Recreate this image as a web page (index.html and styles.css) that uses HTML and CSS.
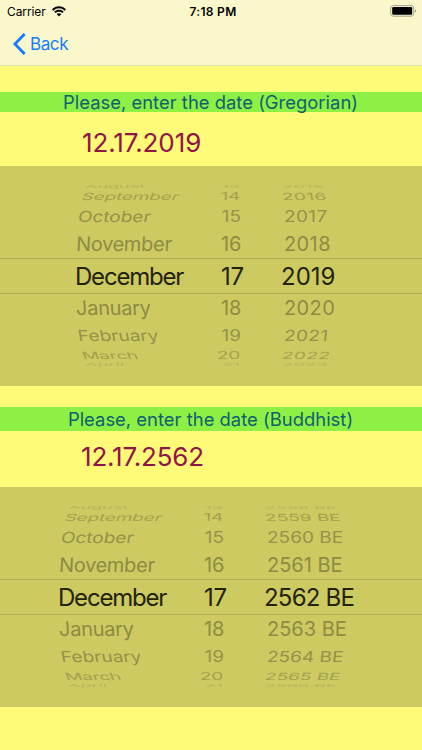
FILE: index.html
```html
<!DOCTYPE html>
<html lang="en">
<head>
    <meta charset="UTF-8">
    <meta name="viewport" content="width=device-width, initial-scale=1.0">
    <title>Calendar converter</title>
    <link rel="stylesheet" href="styles.css">
</head>
<body>
    <header>
        <div class="status">
            <div class="carrier">
                <span>Carrier</span>
                <svg width="14" height="11" viewBox="0 0 14 11">
                    <path d="M0 3.4C3.9-.7 10.1-.7 14 3.4L12.7 4.8C9.5 1.5 4.5 1.5 1.3 4.8ZM2.3 5.8C4.9 3.2 9.1 3.2 11.7 5.8L10.4 7.1C8.5 5.2 5.5 5.2 3.6 7.1ZM4.6 8.1C5.9 6.8 8.1 6.8 9.4 8.1L7 10.6Z"/>
                </svg>
            </div>
            <div class="clock">7:18 PM</div>
            <svg class="battery" width="27" height="12" viewBox="0 0 27 12">
                <rect x="0.7" y="0.6" width="23" height="10.6" rx="2.6" fill="none" stroke="#a3a187"/>
                <rect x="2.2" y="2.1" width="20" height="7.6" rx="1.2"/>
                <path d="M25 4.2C26.5 4.7 26.5 7.1 25 7.6Z" fill="#a3a187"/>
            </svg>
        </div>
        <div class="nav">
            <svg width="13" height="22" viewBox="0 0 13 22">
                <path d="M11.6 1L1.9 11L11.6 21" fill="none" stroke="#147efb" stroke-width="2.9"/>
            </svg>
            <span>Back</span>
        </div>
    </header>

    <div class="title">Please, enter the date (Gregorian)</div>
    <div class="date">12.17.2019</div>
    <div class="picker">
        <div class="row up far4"><span>August</span><span>13</span><span>2015</span></div>
        <div class="row up far3"><span>September</span><span>14</span><span>2016</span></div>
        <div class="row up far2"><span>October</span><span>15</span><span>2017</span></div>
        <div class="row up far1"><span>November</span><span>16</span><span>2018</span></div>
        <div class="row selected"><span>December</span><span>17</span><span>2019</span></div>
        <div class="row down far1"><span>January</span><span>18</span><span>2020</span></div>
        <div class="row down far2"><span>February</span><span>19</span><span>2021</span></div>
        <div class="row down far3"><span>March</span><span>20</span><span>2022</span></div>
        <div class="row down far4"><span>April</span><span>21</span><span>2023</span></div>
    </div>

    <div class="title tall">Please, enter the date (Buddhist)</div>
    <div class="date second">12.17.2562</div>
    <div class="picker buddhist">
        <div class="row up far4"><span>August</span><span>13</span><span>2558 BE</span></div>
        <div class="row up far3"><span>September</span><span>14</span><span>2559 BE</span></div>
        <div class="row up far2"><span>October</span><span>15</span><span>2560 BE</span></div>
        <div class="row up far1"><span>November</span><span>16</span><span>2561 BE</span></div>
        <div class="row selected"><span>December</span><span>17</span><span>2562 BE</span></div>
        <div class="row down far1"><span>January</span><span>18</span><span>2563 BE</span></div>
        <div class="row down far2"><span>February</span><span>19</span><span>2564 BE</span></div>
        <div class="row down far3"><span>March</span><span>20</span><span>2565 BE</span></div>
        <div class="row down far4"><span>April</span><span>21</span><span>2566 BE</span></div>
    </div>
</body>
</html>
```
FILE: styles.css
```css
body {
    margin: 0;
    height: 750px;
    overflow: hidden;
    background-color: #fffb79;
    font-family: Inter, "Liberation Sans", sans-serif;
}
header {
    box-sizing: border-box;
    height: 66px;
    background-color: #faf7cd;
    border-bottom: 1px solid #e0ddb0;
}
.status {
    display: grid;
    grid-template-columns: 1fr auto 1fr;
    align-items: center;
    height: 22px;
    padding: 0 5px 0 7px;
    font-size: 12px;
}
.carrier {
    display: flex;
    align-items: center;
    gap: 6px;
    letter-spacing: -0.1px;
}
.clock {
    padding-left: 2px;
    font-weight: 600;
    letter-spacing: 0.3px;
}
.battery {
    justify-self: end;
}
.nav {
    display: flex;
    align-items: center;
    gap: 4px;
    height: 43px;
    padding-left: 13px;
    color: #147efb;
    font-size: 17px;
    letter-spacing: -0.4px;
}
.title {
    height: 20px;
    margin-top: 26px;
    background-color: #8ef044;
    color: #0f6170;
    font-size: 18.4px;
    line-height: 21px;
    letter-spacing: 0.02px;
    text-align: center;
    text-indent: -1px;
    white-space: nowrap;
}
.title.tall {
    height: 24px;
    margin-top: 21px;
    line-height: 25px;
}
.date {
    height: 54px;
    padding-left: 82px;
    color: #901446;
    font-size: 26px;
    line-height: 62px;
    letter-spacing: -0.1px;
}
.date.second {
    height: 56px;
    padding-left: 81px;
    line-height: 51px;
    letter-spacing: -0.2px;
}
.picker {
    --left: 75px;
    --month: 107px;
    --day: 62px;
    --gap: 37px;
    box-sizing: border-box;
    height: 220px;
    padding: 18px 0;
    background-color: #cdca62;
}
.picker.buddhist {
    --left: 58px;
}
.row {
    display: grid;
    grid-template-columns: var(--month) var(--day) auto;
    align-items: center;
    padding-left: var(--left);
    color: #8e8b43;
    font-size: 20px;
    line-height: 20px;
    white-space: nowrap;
}
.row span:nth-child(2) {
    justify-self: end;
}
.row span:nth-child(3) {
    margin-left: var(--gap);
    letter-spacing: 0.4px;
}
.row span {
    transform-origin: left;
}
.selected {
    box-sizing: border-box;
    height: 36px;
    padding-top: 1px;
    border-top: 1px solid #aeab55;
    border-bottom: 1px solid #aeab55;
    color: #24230d;
    font-size: 24px;
    letter-spacing: -0.2px;
}
.selected span:nth-child(1) {
    letter-spacing: -1.2px;
}
.selected span:nth-child(3) {
    letter-spacing: 0;
}
.far1 {
    --day: 58px;
    --gap: 43px;
    height: 28px;
    padding-left: calc(var(--left) + 1px);
    letter-spacing: -0.3px;
}
.far2 {
    --day: 56px;
    --gap: 43px;
    height: 27px;
    padding-left: calc(var(--left) + 3px);
    color: #95924a;
    font-size: 19px;
}
.far3 {
    --day: 51px;
    --gap: 42px;
    height: 13px;
    padding-left: calc(var(--left) + 7px);
    color: #a4a14f;
    font-size: 19px;
    line-height: 13px;
    letter-spacing: -0.2px;
}
.far4 {
    --day: 48px;
    --gap: 42px;
    height: 6px;
    padding-left: calc(var(--left) + 10px);
    color: #b7b459;
    font-size: 18px;
    line-height: 6px;
}
.buddhist .row span:nth-child(3) {
    letter-spacing: 0;
}
.buddhist .selected span:nth-child(3) {
    letter-spacing: -0.8px;
}

/* rows flatten and lean towards the middle as they roll away */
.far2 span {
    transform: scaleY(0.8);
}
.far3 span {
    transform: scaleY(0.52);
}
.far4 span {
    transform: scaleY(0.22);
}
.up.far1 span:first-child {
    transform: skewX(-3deg);
}
.up.far2 span:first-child {
    transform: scaleY(0.8) skewX(-8deg);
}
.up.far3 span:first-child {
    transform: scaleY(0.52) skewX(-12deg);
}
.up.far3 span:last-child {
    transform: scaleY(0.52) skewX(5deg);
}
.down.far1 span:first-child {
    transform: skewX(3deg);
}
.down.far2 span:first-child {
    transform: scaleY(0.8) skewX(8deg);
}
.down.far2 span:last-child {
    transform: scaleY(0.8) skewX(-5deg);
}
.down.far3 span:first-child {
    transform: scaleY(0.52) skewX(12deg);
}
.down.far3 span:last-child {
    transform: scaleY(0.52) skewX(-8deg);
}
```
